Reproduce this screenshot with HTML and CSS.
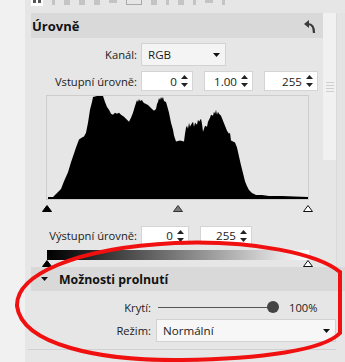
FILE: index.html
```html
<!DOCTYPE html>
<html lang="cs">
<head>
    <meta charset="UTF-8">
    <title>Úrovně</title>
    <link rel="stylesheet" href="styles.css">
</head>
<body>
    <div class="app">
        <div class="side"></div>
        <div class="main">
            <!-- toolbar, cut off at the top -->
            <div class="toolbar">
                <span class="tool active"><i></i><i></i></span>
                <span class="tool t1"></span>
                <span class="tool t2"></span>
                <span class="tool t2"></span>
                <span class="tool t2"></span>
                <span class="tool t3"></span>
                <span class="tool box"></span>
                <span class="tool t2"></span>
                <span class="tool t1"></span>
                <span class="tool t2"></span>
                <span class="tool t1"></span>
                <span class="tool t3"></span>
                <span class="tool t1"></span>
            </div>

            <div class="levels-wrap">
                <div class="levels">
                    <div class="head">
                        <span class="title">Úrovně</span>
                        <svg class="undo" width="12" height="14" viewBox="0 0 12 14">
                            <path d="M0 4 L5 0 L5 8 Z" fill="#3a3a3a"/>
                            <path d="M4 4 Q10 4 10 13" fill="none" stroke="#3a3a3a" stroke-width="2.2"/>
                        </svg>
                    </div>

                    <div class="form">
                        <label>Kanál:</label>
                        <div class="select channel">RGB<svg class="caret" width="7" height="4"><path d="M0 0 L7 0 L3.5 4 Z" fill="#111"/></svg></div>

                        <label>Vstupní úrovně:</label>
                        <div class="nums">
                            <div class="num w51"><span>0</span><svg class="spin" width="7" height="12"><path d="M0 4 L3.5 0 L7 4 Z M0 8 L7 8 L3.5 12 Z" fill="#222"/></svg></div>
                            <div class="num w48"><span>1.00</span><svg class="spin" width="7" height="12"><path d="M0 4 L3.5 0 L7 4 Z M0 8 L7 8 L3.5 12 Z" fill="#222"/></svg></div>
                            <div class="num w53"><span>255</span><svg class="spin" width="7" height="12"><path d="M0 4 L3.5 0 L7 4 Z M0 8 L7 8 L3.5 12 Z" fill="#222"/></svg></div>
                        </div>
                    </div>

                    <div class="hist">
                        <svg viewBox="0 0 261 104" preserveAspectRatio="none">
                            <path fill="#000" d="M1 102 L6 102 L9 99 L14 94 L17 86 L21 77 L24 67 L27 58 L29 52 L32 44 L35 42 L37 41 L39 37 L41 27 L43 14 L45 6 L46 1 L50 0 L56 0 L58 6 L60 11 L62 14 L64 18 L66 19 L68 17 L70 18 L72 17 L74 19 L77 21 L80 24 L82 26 L84 22 L86 17 L88 10 L89 7 L90 4 L91 6 L92 3 L93 5 L95 4 L96 6 L97 7 L99 8 L101 9 L103 11 L105 13 L107 15 L109 13 L110 8 L111 6 L112 2 L113 4 L114 1 L115 3 L116 1 L117 5 L119 6 L121 13 L122 17 L124 27 L126 34 L127 40 L129 46 L133 45 L137 46 L138 38 L139 32 L140 30 L141 33 L142 27 L143 31 L144 29 L146 26 L147 31 L148 27 L150 29 L151 24 L152 26 L154 23 L155 28 L156 36 L157 33 L158 30 L160 31 L161 26 L163 22 L164 19 L166 20 L167 16 L168 18 L169 14 L170 19 L171 16 L172 18 L174 20 L176 25 L178 30 L180 35 L182 38 L183 37 L184 45 L186 46 L188 47 L190 52 L192 61 L194 70 L196 78 L198 86 L200 91 L202 95 L205 98 L209 100 L215 100 L222 101 L235 101 L261 102 L261 104 L1 104 Z"/>
                        </svg>
                    </div>
                    <div class="markers">
                        <svg width="10" height="7"><path d="M0.5 6.5 L5 0.5 L9.5 6.5 Z" fill="#000" stroke="#000"/></svg>
                        <svg width="10" height="7"><path d="M0.5 6.5 L5 0.5 L9.5 6.5 Z" fill="#7a7a7a" stroke="#333"/></svg>
                        <svg width="10" height="7"><path d="M0.5 6.5 L5 0.5 L9.5 6.5 Z" fill="#fff" stroke="#111"/></svg>
                    </div>

                    <div class="form out">
                        <label>Výstupní úrovně:</label>
                        <div class="nums">
                            <div class="num w47"><span>0</span><svg class="spin" width="7" height="12"><path d="M0 4 L3.5 0 L7 4 Z M0 8 L7 8 L3.5 12 Z" fill="#222"/></svg></div>
                            <div class="num w51"><span>255</span><svg class="spin" width="7" height="12"><path d="M0 4 L3.5 0 L7 4 Z M0 8 L7 8 L3.5 12 Z" fill="#222"/></svg></div>
                        </div>
                    </div>
                    <div class="gradient"></div>
                    <div class="markers two">
                        <svg width="10" height="7"><path d="M0.5 6.5 L5 0.5 L9.5 6.5 Z" fill="#000" stroke="#000"/></svg>
                        <svg width="10" height="7"><path d="M0.5 6.5 L5 0.5 L9.5 6.5 Z" fill="#fff" stroke="#111"/></svg>
                    </div>
                </div>
                <div class="scrollbar">
                    <div class="thumb"><i></i><i></i><i></i><i></i></div>
                </div>
                <div class="gutter"></div>
            </div>

            <div class="blend">
                <div class="head2">
                    <svg width="7" height="4"><path d="M0 0 L7 0 L3.5 4 Z" fill="#111"/></svg>
                    <span>Možnosti prolnutí</span>
                </div>
                <div class="form blend-form">
                    <label>Krytí:</label>
                    <div class="opacity">
                        <div class="slider"><span class="knob"></span></div>
                        <span class="pct">100%</span>
                    </div>
                    <label>Režim:</label>
                    <div class="select mode">Normální<svg class="caret" width="7" height="4"><path d="M0 0 L7 0 L3.5 4 Z" fill="#111"/></svg></div>
                </div>
            </div>
            <div class="next"></div>
        </div>
    </div>

    <!-- hand drawn red mark -->
    <svg class="ring" width="345" height="362" viewBox="0 0 345 362">
        <path d="M17 306 C16 275 75 248 175 243 C255 240 318 254 340 272 L340 333 C324 350 262 359 182 360 C100 361 22 345 17 306 Z" fill="none" stroke="#f01010" stroke-width="4"/>
    </svg>
</body>
</html>
```

FILE: styles.css
```css
/* Base */
body {
    margin: 0;
    font-family: "Open Sans", "Noto Sans", sans-serif;
    font-size: 11.2px;
    color: #1b1b1b;
    background-color: #f0f0f0;
}

.app {
    display: flex;
    width: 345px;
    height: 362px;
    overflow: hidden;
}

.side {
    width: 25px;
    background-color: #f1f1f1;
}

.main {
    flex: 1;
    background-color: #e6e6e6;
}

/* Toolbar */
.toolbar {
    height: 13px;
    padding-left: 6px;
    display: flex;
    align-items: flex-start;
    gap: 9px;
}

.tool {
    display: block;
    width: 6px;
    height: 5px;
    background-color: #c4c4c4;
}

.tool.active {
    width: 12px;
    height: 6px;
    background-color: #fff;
    display: flex;
    gap: 2px;
    justify-content: center;
}

.tool.active i {
    display: block;
    width: 3px;
    height: 3px;
    background-color: #555;
}

.tool.t1 { width: 3px; }
.tool.t3 { width: 8px; height: 3px; }

.tool.box {
    width: 14px;
    height: 4px;
    background: none;
    border: 1px solid #aaa;
    border-top: none;
}

/* Levels panel */
.levels-wrap {
    display: flex;
    padding-left: 6px;
}

.levels {
    width: 292px;
}

.head {
    height: 25px;
    background-color: #d9d9d9;
    display: flex;
    align-items: center;
    justify-content: space-between;
    padding: 0 7px 0 1px;
}

.title {
    font-weight: bold;
    font-size: 13px;
    color: #111;
}

.undo {
    margin-top: 2px;
}

.form {
    display: grid;
    grid-template-columns: 106px auto;
    column-gap: 4px;
    row-gap: 5px;
    align-items: center;
    margin-top: 5px;
}

.form label {
    text-align: right;
    white-space: nowrap;
}

.select {
    height: 21px;
    border: 1px solid #d2d2d2;
    background-color: #f4f4f4;
    display: flex;
    align-items: center;
    justify-content: space-between;
    padding: 0 5px 0 6px;
    font-size: 11.6px;
}

.select.channel {
    width: 72px;
}

.nums {
    display: flex;
    gap: 11px;
}

.num {
    height: 18px;
    border: 1px solid #d4d4d4;
    background-color: #fff;
    display: flex;
    align-items: center;
    justify-content: flex-end;
    gap: 4px;
    padding-right: 4px;
    box-sizing: content-box;
}

.w47 { width: 42px; }
.w48 { width: 43px; }
.w51 { width: 46px; }
.w53 { width: 48px; }

.num span {
    font-size: 11.6px;
}

.hist {
    margin: 4px 0 0 15px;
    width: 261px;
    height: 103px;
    border: 1px solid #cdcdcd;
    position: relative;
}

.hist svg {
    position: absolute;
    left: 0;
    top: 0;
    width: 100%;
    height: 100%;
}

.markers {
    width: 271px;
    margin: 5px 0 0 11px;
    display: flex;
    justify-content: space-between;
    height: 7px;
}

.markers svg {
    display: block;
}

.form.out {
    margin-top: 14px;
}

.form.out .num {
    height: 17px;
}

.gradient {
    margin: 5px 0 0 16px;
    width: 262px;
    height: 10px;
    background: linear-gradient(to right, #000 0%, #111 8%, #888 55%, #fff 100%);
}

.markers.two {
    margin-top: 0;
}

/* Scrollbar */
.scrollbar {
    width: 13px;
}

.thumb {
    height: 147px;
    background-color: #f1f1f1;
    display: flex;
    flex-direction: column;
    align-items: center;
    justify-content: center;
    gap: 2px;
}

.thumb i {
    display: block;
    width: 8px;
    height: 1px;
    background-color: #cfcfcf;
}

.gutter {
    width: 8px;
    border-left: 1px solid #dadada;
    background-color: #e3e3e3;
}

/* Blend options */
.blend {
    margin-left: 6px;
}

.head2 {
    height: 24px;
    background-color: #d9d9d9;
    display: flex;
    align-items: center;
    gap: 11px;
    padding-left: 10px;
    font-weight: bold;
    font-size: 12.3px;
    color: #111;
}

.blend-form {
    grid-template-columns: 120px auto;
    column-gap: 5px;
    margin-top: 6px;
    row-gap: 2px;
    width: 305px;
}

.opacity {
    height: 20px;
    display: flex;
    align-items: center;
}

.slider {
    width: 115px;
    height: 1px;
    margin-left: 2px;
    background-color: #555;
    position: relative;
}

.knob {
    position: absolute;
    right: -6px;
    top: -6px;
    width: 12px;
    height: 12px;
    border-radius: 50%;
    background-color: #444;
}

.pct {
    margin-left: 16px;
}

.select.mode {
    width: 167px;
    background-color: #f7f7f7;
    padding-left: 6px;
}

.next {
    margin: 7px 0 0 3px;
    width: 308px;
    border-top: 1px solid #d0d0d0;
    height: 10px;
}

.ring {
    position: absolute;
    left: 0;
    top: 0;
    pointer-events: none;
}
```
